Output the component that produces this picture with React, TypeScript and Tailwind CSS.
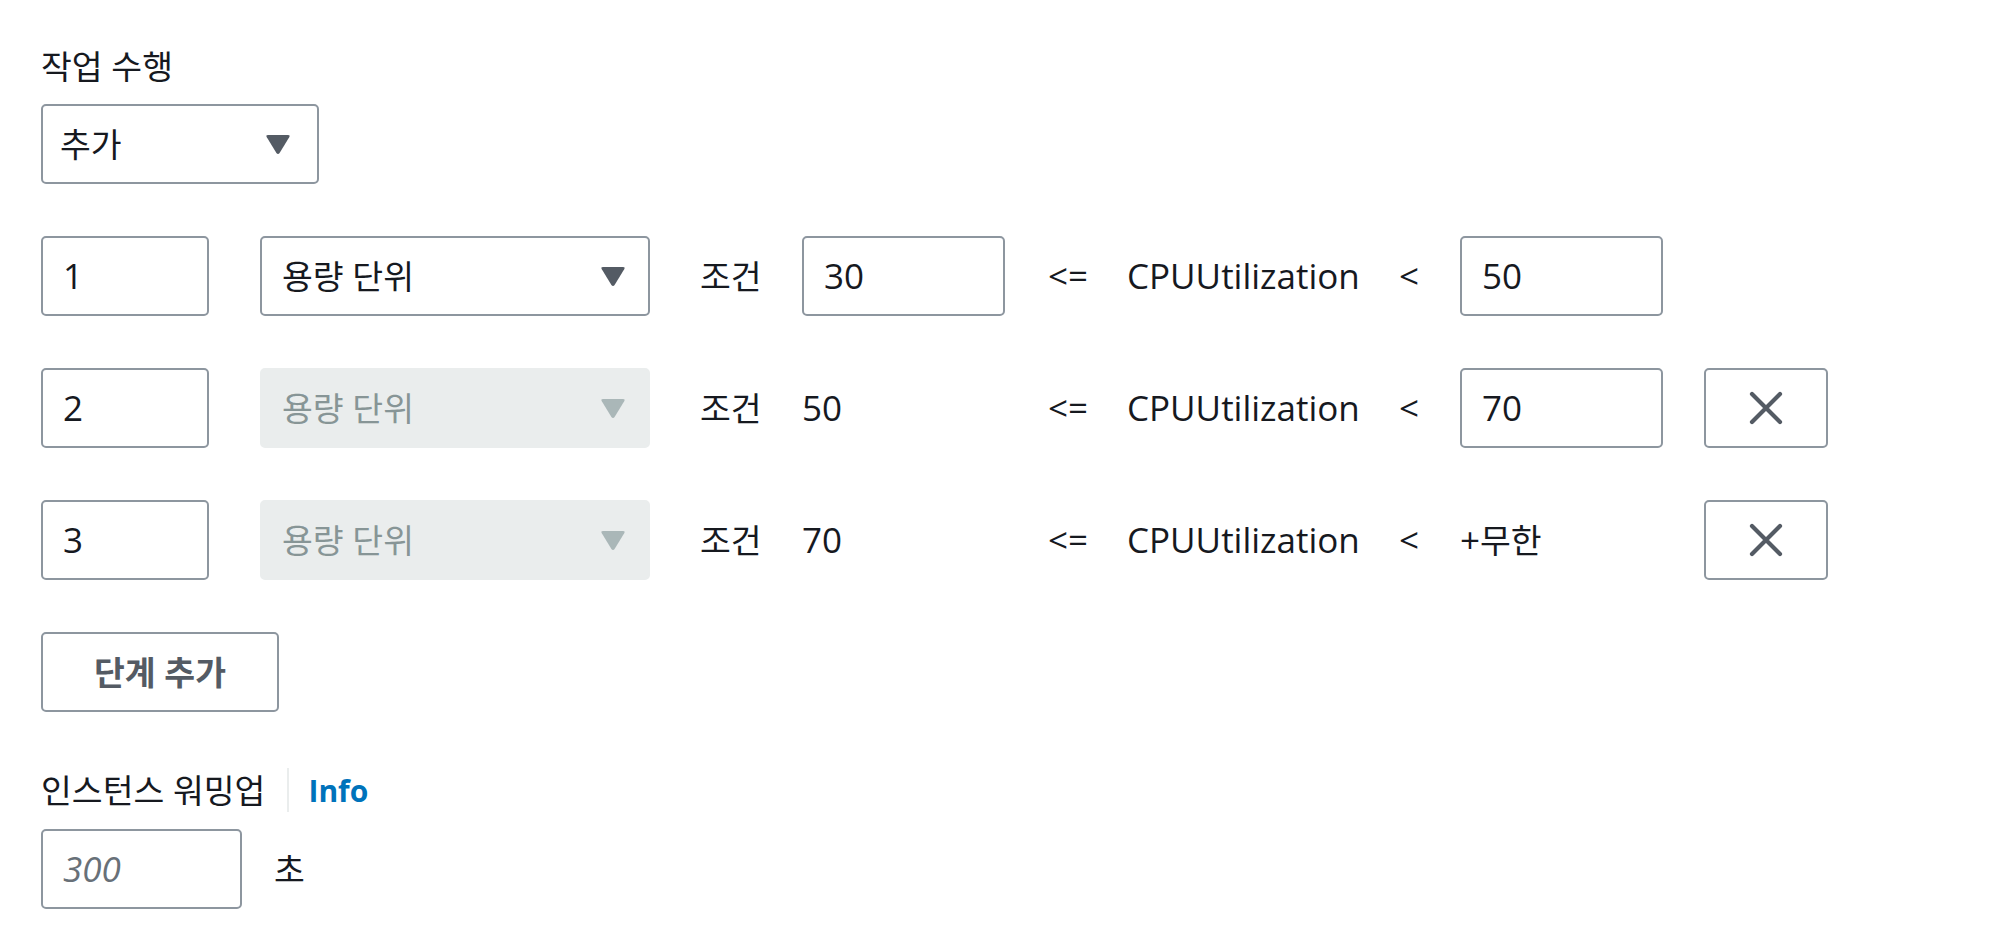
import React from "react";

const FONT = { fontFamily: '"Open Sans", "Noto Sans CJK KR", sans-serif' };

function Caret({ disabled }: { disabled?: boolean }) {
  return (
    <svg width="26" height="22" viewBox="0 0 26 22" className="shrink-0">
      <path
        d="M3 2 H23 Q25.5 2 24.2 4.3 L14.6 20 Q13 22 11.4 20 L1.8 4.3 Q0.5 2 3 2 Z"
        fill={disabled ? "#aab7b8" : "#545b64"}
      />
    </svg>
  );
}

function XIcon() {
  return (
    <svg width="34" height="34" viewBox="0 0 34 34">
      <path d="M3 3 L31 31 M31 3 L3 31" stroke="#545b64" strokeWidth="4.2" strokeLinecap="round" />
    </svg>
  );
}

function Ko({ children, className = "" }: { children: React.ReactNode; className?: string }) {
  return <span className={"text-[33.5px] " + className}>{children}</span>;
}

function Input({ value, w }: { value: string; w: string }) {
  return (
    <div
      className={
        "h-[80px] border-2 border-[#8d969f] rounded-[5px] bg-white flex items-center pl-[20px] text-[35px] text-[#16191f] " +
        w
      }
    >
      {value}
    </div>
  );
}

function Select({ disabled }: { disabled?: boolean }) {
  return (
    <div
      className={
        "w-[390px] h-[80px] rounded-[5px] flex items-center justify-between pl-[20px] pr-[22px] " +
        (disabled ? "bg-[#eaeded] border-2 border-[#eaeded] text-[#879596]" : "bg-white border-2 border-[#8d969f] text-[#16191f]")
      }
    >
      <Ko>용량 단위</Ko>
      <Caret disabled={disabled} />
    </div>
  );
}

function Row({
  n,
  first,
  lower,
  upper,
  removable,
}: {
  n: string;
  first?: boolean;
  lower: string;
  upper: React.ReactNode;
  removable?: boolean;
}) {
  return (
    <div className="flex items-center h-[80px] text-[#16191f]">
      <div className="w-[219px]">
        <Input value={n} w="w-[168px]" />
      </div>
      <div className="w-[440px]">
        <Select disabled={!first} />
      </div>
      <div className="w-[102px]">
        <Ko>조건</Ko>
      </div>
      <div className="w-[246px] text-[35px]">
        {first ? <Input value={lower} w="w-[203px]" /> : <span>{lower}</span>}
      </div>
      <div className="w-[79px] text-[35px]">&lt;=</div>
      <div className="w-[272px] text-[35px]">CPUUtilization</div>
      <div className="w-[61px] text-[35px]">&lt;</div>
      <div className="w-[244px] text-[35px]">{upper}</div>
      {removable && (
        <button className="w-[124px] h-[80px] border-2 border-[#8d969f] rounded-[5px] bg-white flex items-center justify-center">
          <XIcon />
        </button>
      )}
    </div>
  );
}

export default function App() {
  return (
    <div className="min-h-[952px] bg-white pl-[41px] pt-[46px]" style={FONT}>
      <div className="h-[40px] flex items-center text-[#16191f]">
        <Ko>작업 수행</Ko>
      </div>
      <div className="mt-[18px] w-[278px] h-[80px] border-2 border-[#8d969f] rounded-[5px] flex items-center justify-between pl-[17px] pr-[26px] text-[#16191f]">
        <Ko>추가</Ko>
        <Caret />
      </div>

      <div className="mt-[52px] flex flex-col gap-[52px]">
        <Row n="1" first lower="30" upper={<Input value="50" w="w-[203px]" />} />
        <Row n="2" lower="50" upper={<Input value="70" w="w-[203px]" />} removable />
        <Row
          n="3"
          lower="70"
          upper={
            <span>
              +<Ko>무한</Ko>
            </span>
          }
          removable
        />
      </div>

      <button className="mt-[52px] w-[238px] h-[80px] border-2 border-[#8d969f] rounded-[5px] bg-white flex items-center justify-center text-[#545b64] font-bold">
        <Ko className="font-bold">단계 추가</Ko>
      </button>

      <div className="mt-[56px] h-[44px] flex items-center text-[#16191f]">
        <Ko>인스턴스 워밍업</Ko>
        <div className="ml-[22px] w-[2px] h-[44px] bg-[#eaeded]" />
        <span className="ml-[19px] text-[30px] font-bold text-[#0073bb]">Info</span>
      </div>

      <div className="mt-[17px] flex items-center">
        <div className="w-[201px] h-[80px] border-2 border-[#8d969f] rounded-[5px] flex items-center pl-[20px] text-[35px] italic text-[#687078]">
          300
        </div>
        <Ko className="ml-[32px] text-[#16191f]">초</Ko>
      </div>
    </div>
  );
}
